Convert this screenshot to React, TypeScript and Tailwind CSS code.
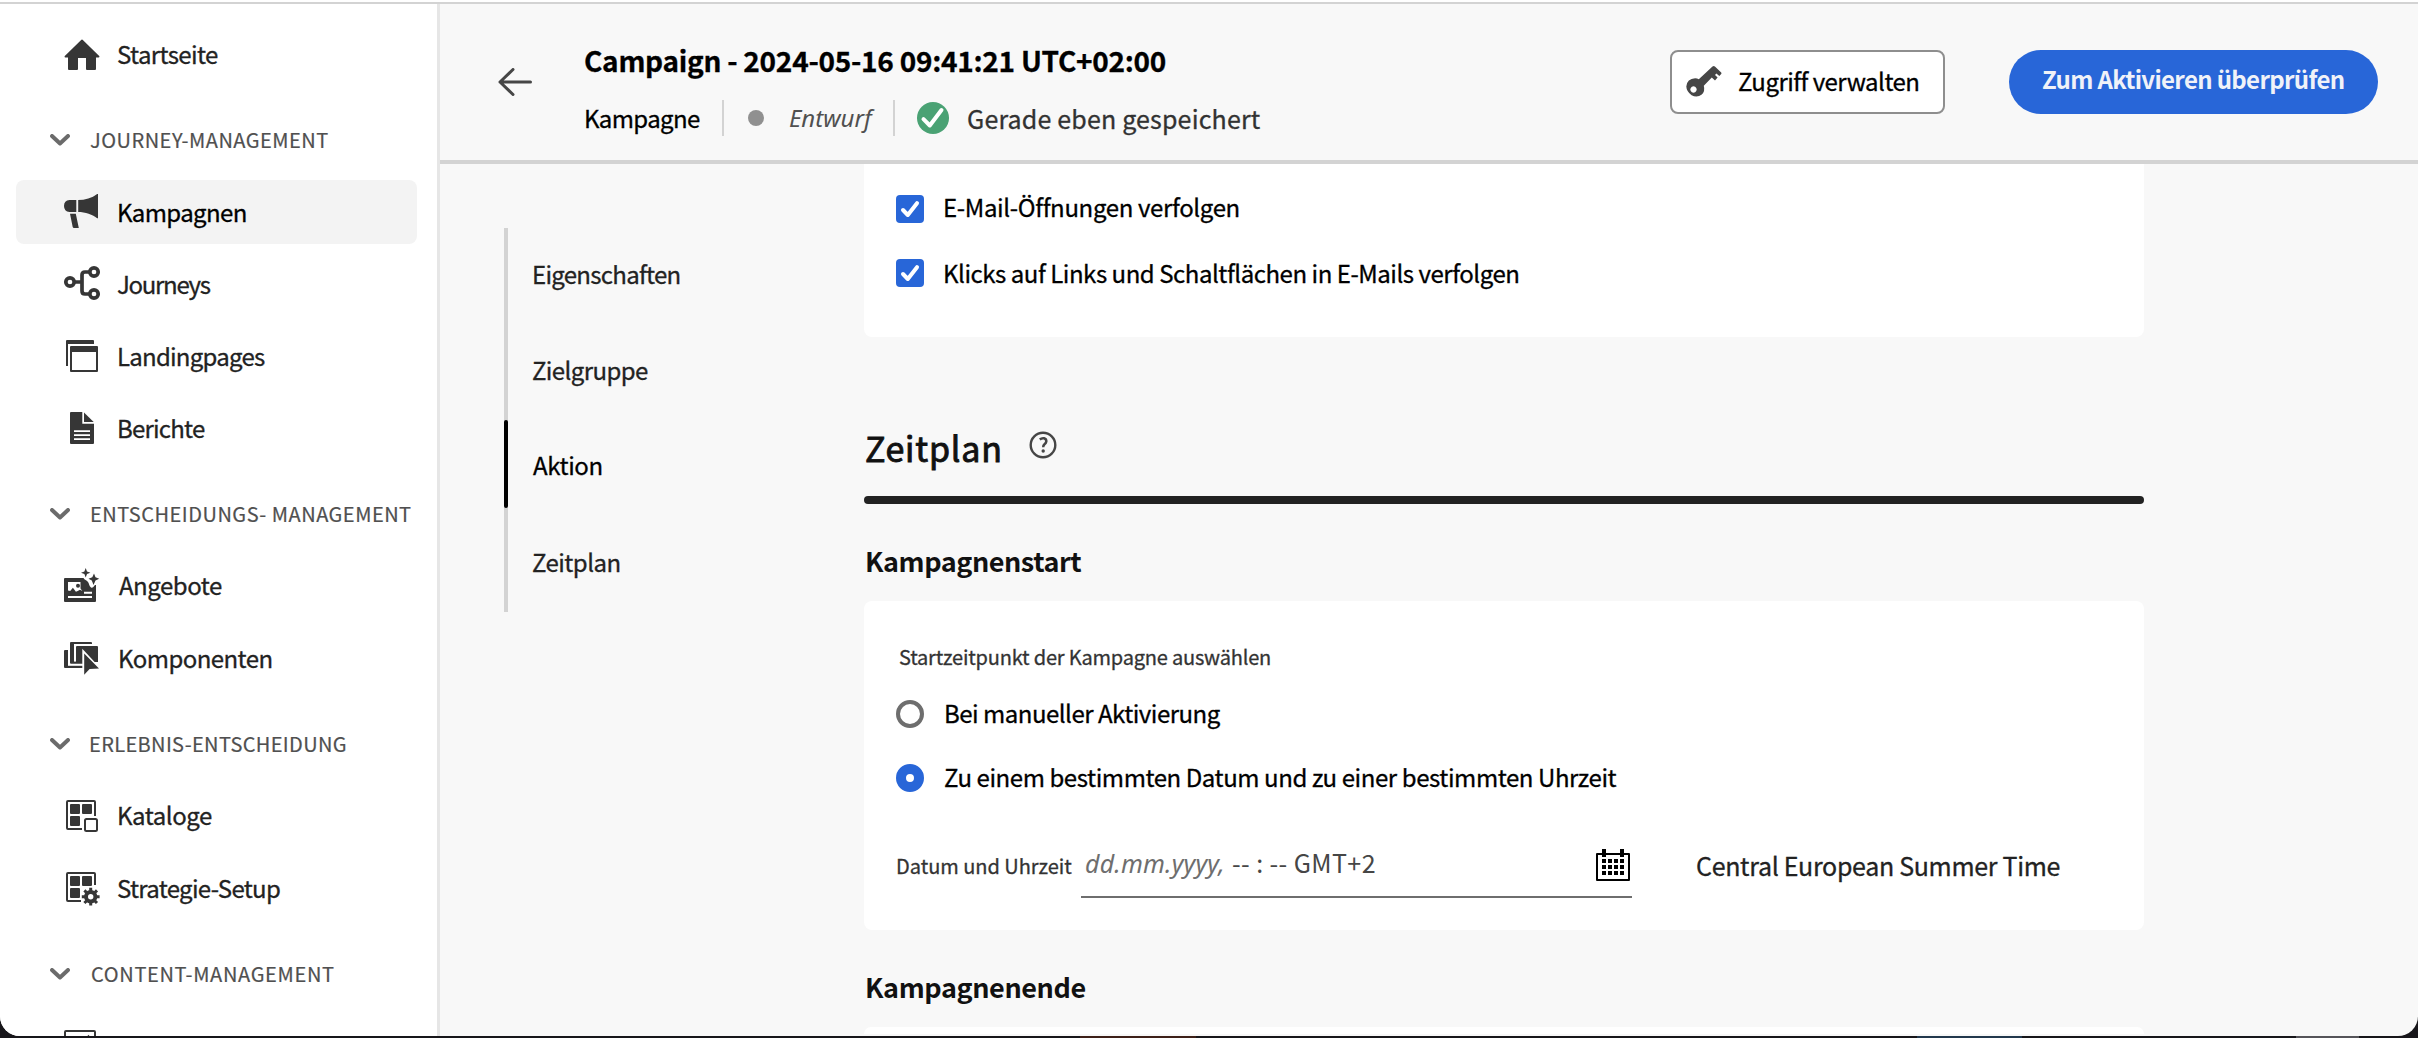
import type { ReactNode } from "react";

const INK = "#363636";

function Icon({ children }: { children: ReactNode }) {
  return (
    <svg className="size-9 shrink-0 overflow-visible" viewBox="0 0 36 36" fill={INK}>
      {children}
    </svg>
  );
}

const HomeIcon = () => (
  <Icon>
    <path d="M16.9 4.2q1.1-1.3 2.2 0L35.2 20q.9 1.2-.6 1.6H32V33q0 1-1 1h-8q-1 0-1-1V22h-8v11q0 1-1 1H5q-1 0-1-1V21.600H1.300Q-.1 21.200.8 20z" />
  </Icon>
);

const CampaignIcon = () => (
  <Icon>
    <path d="M12.300 6v12H5.500Q0 17.500 0 12T5.500 6zM14.200 6C21 6 28 4 33.200 0H34v24.300h-.8C29 20.500 21 18 14.200 18zM6 19.800h5.800l3 14.200H10q-1 0-1.300-1z" />
  </Icon>
);

const JourneysIcon = () => (
  <Icon>
    <g fill="none" stroke={INK} strokeWidth="3.700">
      <circle cx="6" cy="16" r="4.200" />
      <circle cx="30" cy="6" r="4.200" />
      <circle cx="30" cy="28" r="4.200" />
      <path d="M10 16h8M26 6h-5q-3 0-3 3v16q0 3 3 3h5" />
    </g>
  </Icon>
);

const PagesIcon = () => (
  <Icon>
    <path d="M2 3q0-1 1-1h26q1 0 1 1v3H4v22H2z" />
    <path fillRule="evenodd" d="M7 8h26q1 0 1 1v24q0 1-1 1H7q-1 0-1-1V9q0-1 1-1zM8 14v18h24V14z" />
  </Icon>
);

const ReportIcon = () => (
  <Icon>
    <path
      fillRule="evenodd"
      d="M7 2h11.300v11.700H30V33q0 1-1 1H7q-1 0-1-1V3q0-1 1-1zM10 20.200v1.800h16v-1.800zM10 24.200V26h16v-1.800zM10 28.200V30h16v-1.800z"
    />
    <path d="M20 2.500 29.700 12H20z" />
  </Icon>
);

const OffersIcon = () => (
  <Icon>
    <path d="M1 10h18.500c1 2 3 2 4.500 4 1.200 1.500 1 4 3 5.500 2.500 1 3-2 4.200-2.500H32v16q0 1-1 1H1q-1 0-1-1V11q0-1 1-1z" />
    <path fill="#fff" d="M4 14h12.500v6.500l1.800 2.500-2.300-1.200-2.300 1.200-1.800.800-3-4L6.200 23 4 22.500z" />
    <circle cx="14" cy="17.800" r="2" />
    <path fill="#fff" d="M4 28h24v2H4zM20 23.700h8v2h-8z" />
    <path d="M21.700 0 23 3.400l3.400 1.300L23 6l-1.300 3.400L20.400 6 17 4.700l3.400-1.300zM30 5.500l1.500 3.800 3.700 1.500-3.700 1.700-2 4.500-1.700-4.500-3.300-1.700 3.800-1.500z" />
  </Icon>
);

const ComponentsIcon = () => (
  <Icon>
    <rect y="10" width="21" height="18" rx="1" />
    <rect x="4" y="0" width="26" height="25.800" fill="#fff" />
    <rect x="6" y="2" width="22" height="21.800" rx="1" />
    <rect x="10" y="4" width="26" height="17.600" fill="#fff" />
    <path d="M13 6h20q1 0 1 1v15H12V7q0-1 1-1z" />
    <path d="M19.800 12.500v23L24.500 31H37z" fill="#fff" stroke="#fff" strokeWidth="3" />
    <path d="M20.200 13.500v21.300l5.400-5.900 9.400-.3z" />
  </Icon>
);

const Tiles = () => (
  <path d="M7 6h8q1 0 1 1v8q0 1-1 1H7q-1 0-1-1V7q0-1 1-1zM19 6h8q1 0 1 1v8q0 1-1 1h-8q-1 0-1-1V7q0-1 1-1zM7 18h8q1 0 1 1v8q0 1-1 1H7q-1 0-1-1v-8q0-1 1-1z" />
);

const CatalogIcon = () => (
  <Icon>
    <path d="M31 18V4q0-1-1-1H4Q3 3 3 4v26q0 1 1 1h14" fill="none" stroke={INK} strokeWidth="2" />
    <Tiles />
    <rect x="21" y="21" width="12" height="12" rx="1.500" fill="#fff" stroke={INK} strokeWidth="2" />
  </Icon>
);

const StrategyIcon = () => (
  <Icon>
    <path d="M31 15V4q0-1-1-1H4Q3 3 3 4v26q0 1 1 1h13" fill="none" stroke={INK} strokeWidth="2" />
    <Tiles />
    <circle cx="26.700" cy="26.700" r="9" fill="#fff" />
    <g stroke={INK} fill="none">
      <circle cx="26.700" cy="26.700" r="4.700" strokeWidth="4" />
      <path
        strokeWidth="3"
        d="M26.700 17.800v4M26.700 31.600v4M17.800 26.700h4M31.600 26.700h4M20.400 20.400l2.800 2.800M30.200 30.200l2.800 2.800M33 20.400l-2.800 2.800M23.200 30.200l-2.800 2.800"
      />
    </g>
  </Icon>
);

const ContentIcon = () => (
  <Icon>
    <rect x="1" y="3" width="30" height="30" rx="1" fill="none" stroke={INK} strokeWidth="2" />
    <path d="m20 12 4.500-5.200 4.500 5.200z" />
  </Icon>
);

const Chevron = () => (
  <svg className="mt-[2px] h-3 w-5 shrink-0" viewBox="0 0 20 12">
    <path d="m2 2 8 7.500L18 2" fill="none" stroke="#6b6b6b" strokeWidth="4" strokeLinecap="round" strokeLinejoin="round" />
  </svg>
);

function Section({ text, className }: { text: string; className: string }) {
  return (
    <div className="mt-6 mb-3 flex h-[50px] items-center pl-[50px]">
      <Chevron />
      <span className={"pt-px text-[20px] whitespace-nowrap text-[#505050] [-webkit-text-stroke:0.2px] " + className}>{text}</span>
    </div>
  );
}

function Item({ icon, text, className = "", active = false }: { icon: ReactNode; text?: string; className?: string; active?: boolean }) {
  return (
    <div className="flex h-[72px] items-center pr-5 pl-4">
      <div className={"flex h-16 w-full items-center rounded-lg pl-12 " + (active ? "bg-[#f3f3f3] text-black" : "text-[#222222]")}>
        {icon}
        <span className={"ml-4 whitespace-nowrap " + className}>{text}</span>
      </div>
    </div>
  );
}

function Sidebar() {
  return (
    <nav className="w-[440px] shrink-0 border-r-[3px] border-[#e6e6e6] bg-white pt-[14px]">
      <Item icon={<HomeIcon />} text="Startseite" className="pl-px tracking-[-0.62px]" />
      <Section text="JOURNEY-MANAGEMENT" className="ml-5 tracking-[0.5px]" />
      <Item icon={<CampaignIcon />} text="Kampagnen" className="pl-px tracking-[-0.63px]" active />
      <Item icon={<JourneysIcon />} text="Journeys" className="pl-px tracking-[-1.3px]" />
      <Item icon={<PagesIcon />} text="Landingpages" className="pl-px tracking-[-0.76px]" />
      <Item icon={<ReportIcon />} text="Berichte" className="pl-px tracking-[-0.78px]" />
      <Section text="ENTSCHEIDUNGS- MANAGEMENT" className="ml-5 tracking-[0.5px]" />
      <Item icon={<OffersIcon />} text="Angebote" className="pb-[2px] pl-[3px] tracking-[-0.47px]" />
      <Item icon={<ComponentsIcon />} text="Komponenten" className="pl-[2px] tracking-[-0.56px]" />
      <Section text="ERLEBNIS-ENTSCHEIDUNG" className="ml-[19px] tracking-[0.36px]" />
      <Item icon={<CatalogIcon />} text="Kataloge" className="pb-[2px] pl-px tracking-[-0.45px]" />
      <Item icon={<StrategyIcon />} text="Strategie-Setup" className="pl-px tracking-[-0.7px]" />
      <Section text="CONTENT-MANAGEMENT" className="ml-[21px] tracking-[0.66px]" />
      <Item icon={<ContentIcon />} />
    </nav>
  );
}

function Header() {
  return (
    <header className="flex h-40 shrink-0 border-b-4 border-[#d3d3d3] pr-10 pl-[58px]">
      <svg className="mt-[64px] h-7 w-[34px] shrink-0" viewBox="0 0 34 28" fill="none" stroke="#464646" strokeWidth="3" strokeLinecap="round" strokeLinejoin="round">
        <path d="M32.500 14H2M15 1.500 2 14l13 12.500" />
      </svg>
      <div className="ml-[52px] flex flex-col gap-5 pt-9">
        <h1 className="text-[28px] leading-10 font-bold tracking-[-0.27px] whitespace-nowrap text-black">
          Campaign - 2024-05-16 09:41:21 UTC+02:00
        </h1>
        <div className="flex h-9 items-center whitespace-nowrap">
          <span className="w-[138px] tracking-[-0.63px] text-black">Kampagne</span>
          <span className="h-9 w-[2px] bg-[#d3d3d3]" />
          <span className="ml-6 size-4 rounded-full bg-[#909090]" />
          <span className="ml-[25px] w-[104px] font-['Noto_Sans',sans-serif] text-[#505050] italic [-webkit-text-stroke:0]">Entwurf</span>
          <span className="h-9 w-[2px] bg-[#d3d3d3]" />
          <svg className="ml-[22px] size-8" viewBox="0 0 32 32">
            <circle cx="16" cy="16" r="16" fill="#4aa274" />
            <path d="m6.500 17.200 6.300 6.300L24.500 8" fill="none" stroke="#fff" strokeWidth="4" strokeLinecap="round" strokeLinejoin="round" />
          </svg>
          <span className="ml-[18px] text-[25px] tracking-[0.17px] text-[#323232]">Gerade eben gespeichert</span>
        </div>
      </div>
      <div className="ml-auto flex items-center gap-16">
        <button className="flex h-16 w-[275px] items-center rounded-lg border-2 border-[#8e8e8e] bg-white pl-[14px]">
          <svg className="size-9 shrink-0" viewBox="0 0 36 36" fill="#464646">
            <path
              fillRule="evenodd"
              d="M26.500 2.500q1.200-1 2.400 0l6.300 5.900q.600.800 0 1.600l-1.900 1.900-2.900-2.500-1.400 1.500 2.600 2.600-2.600 3-3.200-3-8 8.200q1.500 5.500-2 8.800-4.800 3.800-10.200.700Q.5 27.500.3 22.500 1 14.500 9.200 14.200q2 0 3.600 1zM7.500 22.300a3.200 3.200 0 1 0 .01 0z"
            />
          </svg>
          <span className="ml-4 pb-[3px] tracking-[-0.52px] whitespace-nowrap text-black">Zugriff verwalten</span>
        </button>
        <button className="flex h-16 w-[369px] items-center rounded-full bg-[#2866d8] pb-[6px] pl-[33px]">
          <span className="font-bold tracking-[-0.66px] whitespace-nowrap text-[#f0f2f8] [-webkit-text-stroke:0]">Zum Aktivieren überprüfen</span>
        </button>
      </div>
    </header>
  );
}

function Anchor({ text, className, active = false }: { text: string; className: string; active?: boolean }) {
  return (
    <div className="flex h-24 items-center">
      <div className="w-1 self-stretch bg-[#d3d3d3]">{active && <div className="h-[88px] rounded-[2px] bg-black" />}</div>
      <span className={"whitespace-nowrap " + className}>{text}</span>
    </div>
  );
}

function Check({ text, className }: { text: string; className: string }) {
  return (
    <label className="flex h-16 items-center">
      <svg className="size-7 shrink-0" viewBox="0 0 28 28">
        <rect width="28" height="28" rx="4" fill="#2866d8" />
        <path d="m7 15 4.800 5L21 8.200" fill="none" stroke="#fff" strokeWidth="4" strokeLinecap="round" strokeLinejoin="round" />
      </svg>
      <span className={"ml-[19px] whitespace-nowrap " + className}>{text}</span>
    </label>
  );
}

const Calendar = () => (
  <svg className="h-8 w-[34px] shrink-0" viewBox="0 0 34 32">
    <path d="M6 0h4v4h14V0h4v4h5q1 0 1 1v26q0 1-1 1H1q-1 0-1-1V5q0-1 1-1h5z" />
    <path fill="#fff" d="M2 6h4v2h4V6h14v2h4V6h4v24H2z" />
    <path d="M6 10h4v4H6zM12 10h4v4h-4zM18 10h4v4h-4zM24 10h4v4h-4zM6 16h4v4H6zM12 16h4v4h-4zM18 16h4v4h-4zM24 16h4v4h-4zM6 22h4v4H6zM12 22h4v4h-4zM18 22h4v4h-4zM24 22h4v4h-4z" />
  </svg>
);

export default function App() {
  return (
    <div className="flex h-[1038px] w-[2418px] flex-col overflow-hidden bg-[#17161a] font-['Noto_Sans_CJK_SC','Noto_Sans',sans-serif] text-[24px] leading-9 text-[#222222] [-webkit-text-stroke:0.3px]">
      <div className="flex h-[1036px] shrink-0 flex-col overflow-hidden rounded-b-[20px] bg-[#f8f8f8]">
        <div className="h-1 shrink-0 border-b-2 border-[#d3d3d3] bg-white" />
        <div className="flex h-[1032px] shrink-0 overflow-hidden">
          <Sidebar />
          <main className="flex min-w-0 flex-1 flex-col">
            <Header />
            <div className="flex min-h-0 flex-1 overflow-hidden pl-16">
              <aside className="w-[360px] shrink-0 pt-16">
                <Anchor text="Eigenschaften" className="ml-6 pb-[5px] tracking-[-0.72px]" />
                <Anchor text="Zielgruppe" className="ml-6 pb-[4px] tracking-[-0.6px]" />
                <Anchor text="Aktion" className="ml-[25px] pb-[6px] tracking-[-0.4px] text-black" active />
                <Anchor text="Zeitplan" className="ml-6 pb-[4px] tracking-[-0.5px]" />
              </aside>
              <div className="w-[1280px] shrink-0 text-black">
                <section className="h-[173px] rounded-b-lg bg-white pt-[13px] pl-8">
                  <Check text="E-Mail-Öffnungen verfolgen" className="pb-[4px] tracking-[-0.35px]" />
                  <Check text="Klicks auf Links und Schaltflächen in E-Mails verfolgen" className="tracking-[-0.46px]" />
                </section>
                <div className="mt-[87px] flex h-12 items-center pl-px">
                  <h2 className="w-[164px] text-[34px] leading-[48px] tracking-[0.8px] text-[#111111] [-webkit-text-stroke:0.9px]">Zeitplan</h2>
                  <svg className="mb-[6px] size-7" viewBox="0 0 28 28" fill="none" stroke="#464646" strokeWidth="2.400">
                    <circle cx="14" cy="14" r="12.300" />
                    <path d="M10.800 8.500q2-1.700 4.300-1.200 2.400.700 2.200 3.200-.3 1.600-1.800 2.800-1.400 1.200-1.300 3" strokeWidth="2.500" />
                    <circle cx="14.200" cy="20" r="1.700" fill="#464646" stroke="none" />
                  </svg>
                </div>
                <div className="mt-6 h-2 rounded bg-[#222222]" />
                <h3 className="mt-[37px] pl-px text-[27px] leading-10 font-bold tracking-[-0.45px] text-[#111111] [-webkit-text-stroke:0]">Kampagnenstart</h3>
                <section className="mt-5 flex h-[329px] flex-col rounded-lg bg-white pt-10 pl-8">
                  <p className="pl-[3px] text-[20px] leading-8 tracking-[-0.2px] text-[#333333]">Startzeitpunkt der Kampagne auswählen</p>
                  <label className="mt-[9px] flex h-16 items-center">
                    <span className="size-7 rounded-full border-4 border-[#6e6e6e]" />
                    <span className="ml-5 pb-[2px] tracking-[-0.5px]">Bei manueller Aktivierung</span>
                  </label>
                  <label className="flex h-16 items-center">
                    <span className="size-7 rounded-full border-[10px] border-[#2866d8] bg-white" />
                    <span className="ml-5 pb-[2px] tracking-[-0.42px]">Zu einem bestimmten Datum und zu einer bestimmten Uhrzeit</span>
                  </label>
                  <div className="mt-6 flex h-16 items-center whitespace-nowrap">
                    <span className="w-[185px] text-[20px] tracking-[-0.03px] text-[#333333]">Datum und Uhrzeit</span>
                    <div className="flex h-16 w-[551px] items-center border-b-2 border-[#6e6e6e] pr-[2px] pl-1 text-[25px] [-webkit-text-stroke:0]">
                      <span className="w-[147px] pb-[5px] font-['Noto_Sans',sans-serif] tracking-[0.2px] text-[#6e6e6e] italic">dd.mm.yyyy,</span>
                      <span className="flex-1 pb-[6px] tracking-[0.4px] text-[#464646]">-- : -- GMT+2</span>
                      <Calendar />
                    </div>
                    <span className="ml-16 pb-[2px] text-[25px] tracking-[-0.32px] text-[#222222]">Central European Summer Time</span>
                  </div>
                </section>
                <h3 className="mt-[37px] pl-px text-[27px] leading-10 font-bold tracking-[-0.4px] text-[#111111] [-webkit-text-stroke:0]">Kampagnenende</h3>
                <section className="mt-5 h-[7px] rounded-t-lg bg-white" />
              </div>
            </div>
          </main>
        </div>
      </div>
      <div className="flex h-[2px] shrink-0">
        <div className="ml-[1080px] w-[116px] bg-[#3d2018]" />
        <div className="ml-[721px] w-[105px] bg-[#22384d]" />
        <div className="ml-[274px] w-[63px] bg-[#555459]" />
      </div>
    </div>
  );
}
